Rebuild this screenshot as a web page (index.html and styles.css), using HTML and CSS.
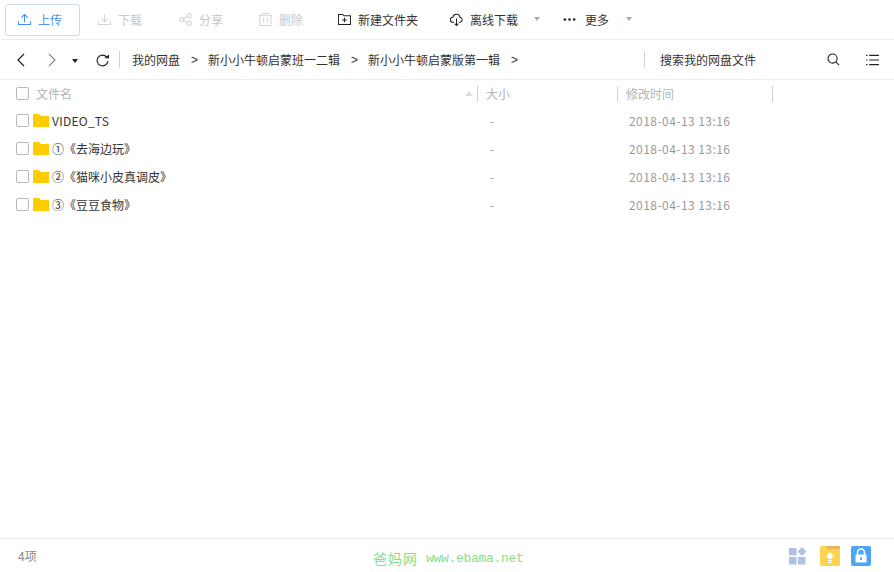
FILE: index.html
```html
<!DOCTYPE html>
<html lang="en">

<head>
    <meta charset="UTF-8">
    <meta name="viewport" content="width=device-width, initial-scale=1.0">
    <title>我的网盘</title>
    <link rel="stylesheet" href="styles.css">
</head>

<body>
    <!-- Toolbar -->
    <div class="toolbar">
        <div class="tool tool-upload">
            <svg class="icon" viewBox="0 0 14 14"><path d="M7 10V1.500M3.500 5L7 1.500L10.500 5M.5 9v3.500h13V9" /></svg>
            <span>上传</span>
        </div>
        <div class="tool tool-off tool-download">
            <svg class="icon" viewBox="0 0 14 14"><path d="M7 1v8.500M3.500 6L7 9.500L10.500 6M.5 9v3.500h13V9" /></svg>
            <span>下载</span>
        </div>
        <div class="tool tool-off tool-share">
            <svg class="icon" viewBox="0 0 14 14"><circle cx="3" cy="7" r="2.200" /><circle cx="11" cy="2.800" r="2.200" /><circle cx="11" cy="11.200" r="2.200" /><path d="M5 6L9 3.800M5 8L9 10.200" /></svg>
            <span>分享</span>
        </div>
        <div class="tool tool-off tool-delete">
            <svg class="icon" viewBox="0 0 14 14"><path d="M0 2.500h14M3.500 .5h7M1 2.500v11h12v-11M5 5.500v5M9 5.500v5" /></svg>
            <span>删除</span>
        </div>
        <div class="tool tool-new">
            <svg class="icon" viewBox="0 0 14 14"><path d="M.5 11.500V1.500h4.500l1.500 1.500h7v9.500h-13zM7 5v5M4.500 7.500h5" /></svg>
            <span>新建文件夹</span>
        </div>
        <div class="tool tool-offline">
            <svg class="icon" viewBox="0 0 14 14"><path d="M4.500 10H3.200A2.700 2.700 0 0 1 3 4.600A4 4 0 0 1 10.800 4.500A2.800 2.800 0 0 1 11 10H9.500M7 6v7.500M5 11.500l2 2l2-2" /></svg>
            <span>离线下载</span>
        </div>
        <i class="caret caret-offline"></i>
        <div class="tool tool-more">
            <svg class="icon" viewBox="0 0 14 14"><circle class="solid" cx="2" cy="7" r="1.400" /><circle class="solid" cx="7" cy="7" r="1.400" /><circle class="solid" cx="12" cy="7" r="1.400" /></svg>
            <span>更多</span>
        </div>
        <i class="caret caret-more"></i>
    </div>

    <!-- Path bar -->
    <div class="pathbar">
        <svg class="nav-icon nav-back" viewBox="0 0 8 14"><path d="M7 1L1 7L7 13" /></svg>
        <svg class="nav-icon nav-forward" viewBox="0 0 8 14"><path d="M1 1L7 7L1 13" /></svg>
        <i class="nav-drop"></i>
        <svg class="nav-icon nav-refresh" viewBox="0 0 14 14"><path d="M11.500 3.300A5.800 5.800 0 1 0 12.800 7.500" /><path class="solid" d="M9 4.500H14V.5z" /></svg>
        <span class="line line-nav"></span>
        <div class="crumbs">
            <span>我的网盘</span>
            <span class="sep">&gt;</span>
            <span>新小小牛顿启蒙班一二辑</span>
            <span class="sep">&gt;</span>
            <span>新小小牛顿启蒙版第一辑</span>
            <span class="sep">&gt;</span>
        </div>
        <div class="search">
            <span class="search-text">搜索我的网盘文件</span>
            <svg class="nav-icon nav-search" viewBox="0 0 14 14"><circle cx="6" cy="6" r="4.900" /><path d="M9.500 9.500L13 13" /></svg>
            <svg class="nav-icon nav-list" viewBox="0 0 14 12"><path d="M3.500 1H14M3.500 6H14M3.500 11H14M0 1H1.500M0 6H1.500M0 11H1.500" /></svg>
        </div>
    </div>

    <!-- File list -->
    <div class="list-head">
        <span class="check"></span>
        <span class="col-name">文件名<i class="sort"></i></span>
        <span class="col-size">大小</span>
        <span class="col-time">修改时间</span>
    </div>
    <div class="list">
        <div class="row">
            <span class="check"></span>
            <svg class="folder" viewBox="0 0 16 13"><path d="M0 1Q0 0 1 0H6L8 2H16V13H0z" /></svg>
            <span class="name name-latin">VIDEO_TS</span>
            <span class="size">-</span>
            <span class="time">2018-04-13 13:16</span>
        </div>
        <div class="row">
            <span class="check"></span>
            <svg class="folder" viewBox="0 0 16 13"><path d="M0 1Q0 0 1 0H6L8 2H16V13H0z" /></svg>
            <span class="name">①《去海边玩》</span>
            <span class="size">-</span>
            <span class="time">2018-04-13 13:16</span>
        </div>
        <div class="row">
            <span class="check"></span>
            <svg class="folder" viewBox="0 0 16 13"><path d="M0 1Q0 0 1 0H6L8 2H16V13H0z" /></svg>
            <span class="name">②《猫咪小皮真调皮》</span>
            <span class="size">-</span>
            <span class="time">2018-04-13 13:16</span>
        </div>
        <div class="row">
            <span class="check"></span>
            <svg class="folder" viewBox="0 0 16 13"><path d="M0 1Q0 0 1 0H6L8 2H16V13H0z" /></svg>
            <span class="name">③《豆豆食物》</span>
            <span class="size">-</span>
            <span class="time">2018-04-13 13:16</span>
        </div>
    </div>

    <!-- Footer -->
    <div class="footer">
        <span class="count">4项</span>
        <span class="mark"><span class="mark-cn">爸妈网</span><span class="mark-en">www.ebama.net</span></span>
        <svg class="foot-icon foot-apps" viewBox="0 0 18 18">
            <rect x="0" y="1" width="7.500" height="7.500" />
            <rect x="0" y="10" width="7.500" height="7.500" />
            <rect x="9" y="10" width="7.500" height="7.500" />
            <path d="M13 0L17.500 4.500L13 9L8.500 4.500z" />
        </svg>
        <svg class="foot-icon foot-folder" viewBox="0 0 20 20">
            <path fill="#fdd452" d="M0 1.500Q0 0 1.500 0H19Q20 .5 20 2V18.500Q20 20 18.500 20H1.500Q0 20 0 18.500z" />
            <path fill="#e8b45a" d="M6 0H18.500Q20 0 20 1.500V3H8z" />
            <path fill="#fff" d="M10 6L14.500 10.500H12V13H8V10.500H5.500zM8 14H12V15H8zM8 16H12V17H8z" />
        </svg>
        <svg class="foot-icon foot-lock" viewBox="0 0 20 20">
            <rect fill="#4da6f5" width="20" height="20" rx="2" />
            <path fill="none" stroke="#fff" stroke-width="1.500" d="M6.500 9V6.500a3.500 3.500 0 0 1 7 0V9" />
            <rect fill="#fff" x="4.500" y="8.500" width="11" height="8" rx="1" />
            <rect fill="#4da6f5" x="9.200" y="11" width="1.600" height="3" />
        </svg>
    </div>
</body>

</html>
```

FILE: styles.css
```css
* {
    box-sizing: border-box;
}

html,
body {
    height: 100%;
}

body {
    margin: 0;
    display: flex;
    flex-direction: column;
    overflow: hidden;
    background: #fff;
    color: #333;
    font-family: "Noto Sans CJK SC", "Liberation Sans", sans-serif;
    font-size: 12px;
}

svg {
    display: block;
    flex: none;
}

/* Toolbar */
.toolbar {
    display: flex;
    align-items: center;
    height: 40px;
    padding-left: 5px;
    border-bottom: 1px solid #ececec;
}

.tool {
    display: flex;
    align-items: center;
    gap: 7px;
}

.icon {
    width: 13px;
    height: 13px;
    fill: none;
    stroke: #222;
    stroke-width: 1.100;
}

.icon .solid {
    fill: #222;
    stroke: none;
}

.tool-upload {
    width: 75px;
    height: 32px;
    padding-left: 12px;
    border: 1px solid #cfdce9;
    border-radius: 3px;
    color: #4b95f0;
}

.tool-upload .icon {
    stroke: #3e8ff2;
}

.tool-off {
    color: #c8c8c8;
}

.tool-off .icon {
    stroke: #d4d4d4;
}

.tool-download {
    margin-left: 18px;
}

.tool-share {
    margin-left: 37px;
}

.tool-delete {
    margin-left: 36px;
}

.tool-new {
    margin-left: 35px;
}

.tool-offline {
    margin-left: 32px;
}

.tool-more {
    margin-left: 23px;
    gap: 9px;
}

.caret {
    width: 0;
    height: 0;
    border-left: 3.500px solid transparent;
    border-right: 3.500px solid transparent;
    border-top: 4px solid #aaa;
    margin-bottom: 2px;
}

.caret-offline {
    margin-left: 16px;
}

.caret-more {
    margin-left: 17px;
}

/* Path bar */
.pathbar {
    display: flex;
    align-items: center;
    height: 40px;
    padding-left: 17px;
    border-bottom: 1px solid #ececec;
}

.nav-icon {
    fill: none;
    stroke: #222;
    stroke-width: 1.200;
}

.nav-icon .solid {
    fill: #222;
    stroke: none;
}

.nav-back {
    width: 8px;
    height: 14px;
}

.nav-forward {
    width: 8px;
    height: 14px;
    margin-left: 23px;
    stroke: #888;
}

.nav-drop {
    width: 0;
    height: 0;
    margin-left: 16px;
    margin-top: 2px;
    border-left: 3.500px solid transparent;
    border-right: 3.500px solid transparent;
    border-top: 4px solid #222;
}

.nav-refresh {
    width: 13px;
    height: 13px;
    margin-left: 18px;
    margin-top: 1px;
}

.line-nav {
    width: 1px;
    height: 17px;
    margin-left: 10px;
    background: #d2d2d2;
}

.crumbs {
    display: flex;
    align-items: center;
    gap: 10px;
    margin-left: 12px;
    width: 512px;
}

.sep {
    width: 8px;
    text-align: right;
    font-family: "Liberation Sans", sans-serif;
}

.search {
    display: flex;
    align-items: center;
    flex: 1;
    height: 17px;
    padding-left: 15px;
    border-left: 1px solid #d2d2d2;
}

.search-text {
    width: 167px;
}

.nav-search {
    width: 13px;
    height: 13px;
}

.nav-list {
    width: 13px;
    height: 12px;
    margin-left: 26px;
}

/* File list */
.list-head {
    display: flex;
    align-items: center;
    height: 27px;
    padding-left: 16px;
    color: #b4b4b4;
}

.check {
    flex: none;
    width: 13px;
    height: 13px;
    border: 1px solid #b8b8b8;
    border-radius: 2px;
    background: #fff;
}

.col-name {
    display: flex;
    align-items: center;
    justify-content: space-between;
    width: 441px;
    height: 16px;
    margin-left: 7px;
    padding-right: 4px;
}

.sort {
    width: 0;
    height: 0;
    border-left: 4px solid transparent;
    border-right: 4px solid transparent;
    border-bottom: 5px solid #ddd;
}

.col-size,
.col-time {
    height: 16px;
    line-height: 16px;
    padding-left: 8px;
    border-left: 1px solid #d2d2d2;
}

.col-size {
    width: 140px;
}

.col-time {
    width: 156px;
    border-right: 1px solid #d2d2d2;
}

.list {
    flex: 1;
}

.row {
    display: flex;
    align-items: center;
    height: 28px;
    padding-left: 16px;
    padding-bottom: 1px;
}

.folder {
    width: 16px;
    height: 13px;
    margin-left: 4px;
    fill: #ffcc00;
}

.name {
    width: 438px;
    margin-left: 3px;
}

.name-latin {
    letter-spacing: .25px;
}

.size {
    width: 139px;
    color: #999;
}

.time {
    color: #999;
    letter-spacing: .45px;
}

/* Footer */
.footer {
    display: flex;
    align-items: center;
    height: 34px;
    padding-left: 18px;
    border-top: 1px solid #f0f0f0;
}

.count {
    width: 355px;
    color: #888;
}

.mark {
    display: flex;
    align-items: center;
    width: 416px;
    margin-top: 4px;
    color: #86e086;
}

.mark-cn {
    font-size: 14px;
    letter-spacing: 1px;
}

.mark-en {
    margin-left: 8px;
    margin-top: 2px;
    font-family: "Liberation Mono", monospace;
    font-size: 13px;
    letter-spacing: -.3px;
}

.foot-icon {
    width: 20px;
    height: 20px;
}

.foot-apps {
    width: 18px;
    height: 18px;
    fill: #afc2e2;
}

.foot-folder {
    margin-left: 13px;
}

.foot-lock {
    margin-left: 11px;
}
```
